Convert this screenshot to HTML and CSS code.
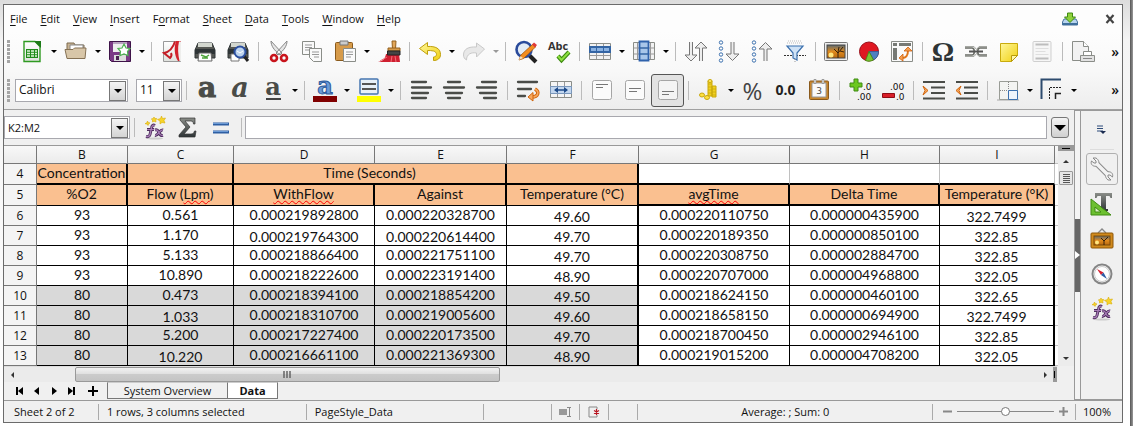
FILE: index.html
```html
<!DOCTYPE html>
<html lang="en">
<head>
<meta charset="utf-8">
<title>Spreadsheet</title>
<link rel="stylesheet" href="styles.css">
</head>
<body>
<svg class="defs" aria-hidden="true">
  <defs>
    <linearGradient id="steel" x1="0" y1="0" x2="0" y2="1"><stop offset="0" stop-color="#8a8d88"/><stop offset="1" stop-color="#2e3436"/></linearGradient>
    <linearGradient id="sunset" x1="0" y1="0" x2="0" y2="1"><stop offset="0" stop-color="#5d6b72"/><stop offset=".5" stop-color="#e08a1e"/><stop offset="1" stop-color="#b8690f"/></linearGradient>
    <linearGradient id="paper" x1="0" y1="0" x2="0" y2="1"><stop offset="0" stop-color="#fff"/><stop offset="1" stop-color="#dfe1dd"/></linearGradient>
    <linearGradient id="yellow" x1="0" y1="0" x2="1" y2="1"><stop offset="0" stop-color="#fff79a"/><stop offset="1" stop-color="#f0d010"/></linearGradient>
    <symbol id="fx" viewBox="0 0 24 24">
      <ellipse cx="12" cy="22.500" rx="8" ry="1" fill="#ccc"/>
      <path d="M12 9.500c-2-1-3 0-3.500 2.500l-1.500 6.500c-.500 2-2 2.500-4 2M4 13.500h7M12 14c3-1 3 1 4 3s2 3 4 2.500M20 14c-3-1-5 6-8 5.500" fill="none" stroke="#4e2d5e" stroke-width="3"/>
      <path d="M12 9.500c-2-1-3 0-3.500 2.500l-1.500 6.500c-.500 2-2 2.500-4 2M4 13.500h7M12 14c3-1 3 1 4 3s2 3 4 2.500M20 14c-3-1-5 6-8 5.500" fill="none" stroke="#a77db6" stroke-width="1.200"/>
      <path d="M18.500 0l1 2.500 3-.500-1.500 2.500 1 2.500-3-.500-2 1.500v-3l-2.500-1.500 3-1zM11 1l.800 1.500 2 0-1 1.700.2 1.800-2-.8-1.500.8v-2l-1.200-1 1.900-.5zM4.500 5l.7 1.500 1.800.5-1.500 1-.5 1.500-1-1.500-2-.300 1.800-.9z" fill="#f7d428" stroke="#d8ad0a" stroke-width=".6"/>
    </symbol>
  </defs>
</svg>
<div class="window">
  <header class="menubar">
    <nav class="menus" aria-label="Menu">
      <button><u>F</u>ile</button><button><u>E</u>dit</button><button><u>V</u>iew</button><button><u>I</u>nsert</button><button>F<u>o</u>rmat</button><button><u>S</u>heet</button><button><u>D</u>ata</button><button><u>T</u>ools</button><button><u>W</u>indow</button><button><u>H</u>elp</button>
    </nav>
    <button class="update" aria-label="Update"><svg width="16" height="14" viewBox="0 0 16 14"><path d="M2 7h12l1.500 3v3H.5v-3z" fill="#b8d4ee" stroke="#44719c"/><path d="M1 12h14" stroke="#3f6f9c" stroke-width="2"/><path d="M5.500 1h5v4h3L8 10.500 2.500 5h3z" fill="#8ed13c" stroke="#3f8a12"/></svg></button>
    <button class="close" aria-label="Close"><svg width="10" height="10" viewBox="0 0 10 10"><path d="M1.500 1l7 8M8.500 1l-7 8" stroke="#444" stroke-width="2.200"/></svg></button>
  </header>

  <div class="toolbar" role="toolbar" aria-label="Standard">
    <span class="grip"></span>
    <button class="tool" aria-label="New"><svg viewBox="0 0 24 24"><path d="M4 1.500h11l5 5v15H4z" fill="url(#paper)" stroke="#2f9a22" stroke-width="1.400"/><path d="M14 1h7v7z" fill="#1d7a18"/><rect x="6" y="9" width="12" height="9" fill="#1f8a18"/><path d="M7 11h3M11 11h3M15 11h2M7 13.500h3M11 13.500h3M15 13.500h2M7 16h3M11 16h3M15 16h2" stroke="#dff5da" stroke-width="1.300"/></svg></button>
    <button class="drop" aria-label="New options"></button>
    <button class="tool" aria-label="Open"><svg viewBox="0 0 24 24"><path d="M3 9V3h7l1 2h9v5" fill="#c9b494" stroke="#7d6a4e"/><path d="M6 5h13v6H6z" fill="#fff" stroke="#888"/><path d="M1 9.500h8l1.500-1.500H22l-1 10.500H3z" fill="#d8c6a8" stroke="#857154"/></svg></button>
    <button class="drop" aria-label="Open options"></button>
    <button class="tool" aria-label="Save"><svg viewBox="0 0 24 24"><path d="M1.500 1.500h21v20h-19l-2-2z" fill="#7b3a86" stroke="#3e1348"/><path d="M5 2h14v10H5z" fill="#eee"/><path d="M5 2h14v2H5z" fill="#b9a2c0"/><path d="M6 15h12v6H6z" fill="#ddd"/><path d="M8 16h3v4H8z" fill="#4a2252"/><path d="M16 4l2 4 4 .500-2.500 3 .500 4-4-1.500-4 1.500.500-4-2.500-3 4-.500z" fill="#fff" stroke="#4cb050" stroke-width="1.200"/></svg></button>
    <button class="drop" aria-label="Save options"></button>
    <i class="sep"></i>
    <button class="tool" aria-label="Export PDF"><svg viewBox="0 0 24 24"><path d="M3.500 1.500h14l3 3v17h-17z" fill="url(#paper)" stroke="#999"/><path d="M15 1.500C13 8 9 12 4 13l6 5c2-2 2-3 1-5" fill="none" stroke="#c41e26" stroke-width="2"/><path d="M16 1h5v20h-3c-4-6-4-14-2-20z" fill="#d3222c"/><path d="M19 1.500c-1.500 6-1 13 .500 19.500h1.500V1.500z" fill="#eeeeec"/></svg></button>
    <button class="tool" aria-label="Print"><svg viewBox="0 0 24 24"><path d="M5 3h14l3 7v8H2v-8z" fill="#555753" stroke="#2e3436"/><path d="M5 3h14v4H5z" fill="#d3d7cf"/><path d="M2 9h20v5H2z" fill="#2e3436"/><path d="M6 13h12l1 8H5z" fill="#fff" stroke="#666"/><path d="M8 15l5 2 3-2M9 18h6" stroke="#4ca33a" stroke-width="1.500" fill="none"/></svg></button>
    <button class="tool" aria-label="Print preview"><svg viewBox="0 0 24 24"><path d="M5 3h14l3 7v8H2v-8z" fill="#555753" stroke="#2e3436"/><path d="M5 3h14v4H5z" fill="#d3d7cf"/><path d="M2 9h20v5H2z" fill="#2e3436"/><path d="M5 14h8v7H5z" fill="#fff" stroke="#777"/><path d="M18 16l4 5" stroke="#222" stroke-width="3"/><circle cx="14" cy="12" r="5.500" fill="#bcd3ee" stroke="#2b4fa0" stroke-width="2"/><path d="M11 11l3 2 3-2" stroke="#fff" fill="none"/></svg></button>
    <i class="sep"></i>
    <button class="tool" aria-label="Cut"><svg viewBox="0 0 24 24"><path d="M4 1c0 5 3 9 9 14l2-2zM20 1c0 5-3 9-9 14l-2-2z" fill="#e6e6e6" stroke="#888"/><ellipse cx="7" cy="18" rx="3" ry="3" fill="none" stroke="#c8141c" stroke-width="2.600"/><ellipse cx="17" cy="18" rx="3" ry="3" fill="none" stroke="#c8141c" stroke-width="2.600"/></svg></button>
    <button class="tool" aria-label="Copy"><svg viewBox="0 0 24 24"><path d="M2.500 1.500h12v13h-12z" fill="#fafafa" stroke="#8a8d88"/><path d="M5 5h7M5 7.500h7M5 10h5" stroke="#999"/><path d="M9.500 8.500h12v13h-8l-4-4z" fill="#fafafa" stroke="#8a8d88"/><path d="M12 12h7M12 14.500h7M14 17h5" stroke="#999"/></svg></button>
    <button class="tool" aria-label="Paste"><svg viewBox="0 0 24 24"><rect x="2.500" y="2.500" width="17" height="18" rx="1" fill="#d79b4a" stroke="#8a5a1c"/><path d="M7 1h8v4H7z" fill="#ccc" stroke="#777"/><path d="M10.500 8.500h12v13h-12z" fill="#fafafa" stroke="#8a8d88"/><path d="M13 12h7M13 14.500h7M13 17h5" stroke="#999"/></svg></button>
    <button class="drop" aria-label="Paste options"></button>
    <button class="tool" aria-label="Clone formatting"><svg viewBox="0 0 24 24"><path d="M1 22c6-1 7-4 8-8h13l1 8z" fill="#cf1f30"/><path d="M3 21l7-4M15 16l-1 6M18 16l1 6" stroke="#f0707a"/><path d="M15 1h4l-.500 8h-3z" fill="#e2a65a" stroke="#93611f"/><path d="M11 8h12v3H11z" fill="#d79b4a" stroke="#93611f"/><path d="M10.500 11h12.500v4H10.500z" fill="#444" stroke="#222"/></svg></button>
    <i class="sep"></i>
    <button class="tool" aria-label="Undo"><svg viewBox="0 0 24 24"><path d="M1.500 8.500l8-6v4c8-.500 13 2 13 8 0 4-3 6-7 6v-3.500c4 0 4-5 0-6-2-.500-4-.500-6-.500v4z" fill="url(#yellow)" stroke="#c0a00c"/></svg></button>
    <button class="drop" aria-label="Undo options"></button>
    <button class="tool" aria-label="Redo"><svg viewBox="0 0 24 24"><path d="M22.500 9l-8-6v4c-8-.500-13 2-13 8 0 2 1 4 3 5 0-6 5-8 10-7v4z" fill="#e8e8e8" stroke="#c9c9c9"/></svg></button>
    <button class="drop faded" aria-label="Redo options"></button>
    <i class="sep"></i>
    <button class="tool" aria-label="Find and replace"><svg viewBox="0 0 24 24"><path d="M15 15l7 7" stroke="#222" stroke-width="4"/><circle cx="10" cy="9.500" r="7.500" fill="#e3ecf6" stroke="#2a4b9b" stroke-width="2.600"/><path d="M5 20l2-5L19 4l3 2.500L9.500 18.500z" fill="#f28d20" stroke="#a85808" stroke-width=".8"/><path d="M18 4.500l2-2 3 2.500-2 2.500z" fill="#e03a3a"/><path d="M5 20l1.500-4 2.500 2z" fill="#f1dfc2"/></svg></button>
    <button class="tool" aria-label="Spelling"><svg viewBox="0 0 24 24"><text x="1" y="10" class="glyph abc">Abc</text><path d="M11 16l3.500 4L22 12" fill="none" stroke="#3d8a10" stroke-width="4.200"/><path d="M11 16l3.500 4L22 12" fill="none" stroke="#8ee040" stroke-width="2"/></svg></button>
    <i class="sep"></i>
    <button class="tool" aria-label="Row"><svg viewBox="0 0 24 24"><path d="M1.500 3.500h21v16h-21z" fill="#f2f2f2" stroke="#8a8d88"/><path d="M8.500 4v15M15.500 4v15M2 15.500h20" stroke="#999"/><path d="M1 6h22v7H1z" fill="#3465a4"/><path d="M3 9.500h18" stroke="#8ab2e2" stroke-width="3"/><path d="M8.500 8v3M15.500 8v3" stroke="#3465a4"/></svg></button>
    <button class="drop" aria-label="Row options"></button>
    <button class="tool" aria-label="Column"><svg viewBox="0 0 24 24"><path d="M1.500 2.500h21v17h-21z" fill="#f2f2f2" stroke="#8a8d88"/><path d="M2 8h20M2 14h20M5.500 3v16M18.500 3v16" stroke="#999"/><path d="M7.500 1.500h9v19h-9z" fill="#a8c6ea" stroke="#2f62ac" stroke-width="1.800"/><path d="M8 8h8M8 14h8" stroke="#3465a4" stroke-width="1.400"/></svg></button>
    <button class="drop" aria-label="Column options"></button>
    <i class="sep"></i>
    <button class="tool" aria-label="Sort"><svg viewBox="0 0 24 24"><path d="M5.500 2v13H1L7 21l6-6H8.500V2M15.500 21V8H11l6-6 6 6h-4.500v13" fill="#eee" stroke="#777"/></svg></button>
    <button class="tool" aria-label="Sort ascending"><svg viewBox="0 0 24 24"><g fill="#fff" stroke="#3b70ae"><circle cx="4" cy="2.500" r="1.700"/><circle cx="4" cy="8.500" r="1.700"/><circle cx="4" cy="14.500" r="1.700"/><circle cx="4" cy="20.500" r="1.700"/></g><path d="M14 2v12H9l6.500 6.500L22 14h-5V2" fill="#eee" stroke="#777"/></svg></button>
    <button class="tool" aria-label="Sort descending"><svg viewBox="0 0 24 24"><g fill="#fff" stroke="#3b70ae"><circle cx="4" cy="2.500" r="1.700"/><circle cx="4" cy="8.500" r="1.700"/><circle cx="4" cy="14.500" r="1.700"/><circle cx="4" cy="20.500" r="1.700"/></g><path d="M14 21V9H9l6.500-6.500L22 9h-5v12" fill="#eee" stroke="#777"/></svg></button>
    <button class="tool" aria-label="AutoFilter"><svg viewBox="0 0 24 24"><path d="M5 1h14M4 3h16" stroke="#bbb" stroke-dasharray="1 1"/><path d="M1 15.500h22" stroke="#333" stroke-dasharray="2 1"/><path d="M4 6h16l-6 7v7l-4-2v-5z" fill="#cfe2f6" stroke="#3b70ae" stroke-width="1.200"/><path d="M12 19v4" stroke="#999" stroke-dasharray="1 1"/></svg></button>
    <i class="sep"></i>
    <button class="tool" aria-label="Image"><svg viewBox="0 0 24 24"><rect x=".5" y="2.500" width="23" height="18" rx="1" fill="#eee" stroke="#777"/><rect x="3" y="5" width="18" height="13" fill="url(#sunset)" stroke="#444"/><circle cx="7" cy="15" r="2.500" fill="#ffe680"/><path d="M14 18v-5l-4-4M14 13l5-6M16 11l4 1M14 12l1-5" stroke="#35200a" fill="none"/></svg></button>
    <button class="tool" aria-label="Chart"><svg viewBox="0 0 24 24"><circle cx="12" cy="11.500" r="9.500" fill="#e01822" stroke="#98101a"/><path d="M12 11.500h9.500c0 4-2 7-5 8.500z" fill="#4f80c0" stroke="#2f5c9b" stroke-width=".8"/><path d="M12 11.500l4.500 8.500c-3 1.500-6 1.500-8 .500z" fill="#7dc434" stroke="#3f8a12" stroke-width=".8"/></svg></button>
    <button class="tool" aria-label="Pivot table"><svg viewBox="0 0 24 24"><path d="M1.500 1.500h21v20h-21z" fill="#fafafa" stroke="#8a8d88"/><path d="M3 3h4v3H3zM9 3h12v3H9zM3 8h4v12H3z" fill="#777a75"/><path d="M12 18c5 0 6-3 6-8" stroke="#e0761a" stroke-width="2" fill="none"/><path d="M14 11l4-4 4 4zM13 14l-4 4 4 3z" fill="#f5a050" stroke="#cf5f0a" stroke-width=".8"/></svg></button>
    <i class="sep"></i>
    <button class="tool" aria-label="Special character"><svg viewBox="0 0 24 24"><text x="12" y="21" text-anchor="middle" class="glyph omega">Ω</text></svg></button>
    <button class="tool" aria-label="Hyperlink"><svg viewBox="0 0 24 24"><path d="M1 6.500h9l2.500 3 2.500-3h8M1 16.500h9l2.500-3 2.500 3h8" fill="none" stroke="#a5a7a2"/><path d="M1 8h7c3 0 3 7 0 7H1M23 8h-7c-3 0-3 7 0 7h7" fill="none" stroke="#696c66" stroke-width="1.600"/><path d="M5 11.500h14" stroke="#555" stroke-width="2"/></svg></button>
    <button class="tool" aria-label="Comment"><svg viewBox="0 0 24 24"><path d="M3.500 3.500h17v12l-6 6h-11z" fill="url(#yellow)" stroke="#c9ab0c"/><path d="M20.500 15.500h-6v6z" fill="#fff7a8" stroke="#b89b08"/></svg></button>
    <button class="tool" aria-label="Headers and footers"><svg viewBox="0 0 24 24"><rect x="3" y="1.500" width="18" height="20" rx="1" fill="#f6f6f6" stroke="#cfcfcf"/><path d="M5.500 4.500h13M5.500 18.500h13" stroke="#bdbdbd" stroke-width="2"/><path d="M5.500 8.500h13M5.500 11.500h10M5.500 14.500h13" stroke="#dedede"/></svg></button>
    <i class="sep"></i>
    <button class="tool" aria-label="Print area"><svg viewBox="0 0 24 24"><path d="M1.500 1.500h11l5 5v14h-16z" fill="#f2f2f2" stroke="#8a8d88"/><path d="M12.500 1.500v5h5" fill="#fff" stroke="#8a8d88"/><path d="M12.500 11.500h8v5h-8z" fill="#fff" stroke="#8a8d88"/><path d="M9.500 15.500h14v6h-14z" fill="#e2e2e2" stroke="#8a8d88"/><path d="M12 18.500h9" stroke="#888"/></svg></button>
    <button class="more" aria-label="More">»</button>
  </div>

  <div class="toolbar format" role="toolbar" aria-label="Formatting">
    <span class="grip"></span>
    <label class="combo font-name"><select aria-label="Font name"><option>Calibri</option></select><span class="arrow"></span></label>
    <label class="combo font-size"><select aria-label="Font size"><option>11</option></select><span class="arrow"></span></label>
    <i class="sep"></i>
    <button class="tool" aria-label="Bold"><svg viewBox="0 0 24 24"><text x="12" y="19" text-anchor="middle" class="glyph serif-a heavy">a</text></svg></button>
    <button class="tool" aria-label="Italic"><svg viewBox="0 0 24 24"><text x="12" y="19" text-anchor="middle" class="glyph serif-a slant">a</text></svg></button>
    <button class="tool" aria-label="Underline"><svg viewBox="0 0 24 24"><text x="12" y="17" text-anchor="middle" class="glyph serif-a">a</text><path d="M5 21h15" stroke="#444" stroke-width="2"/></svg></button>
    <button class="drop" aria-label="Underline options"></button>
    <i class="sep"></i>
    <button class="tool" aria-label="Font color"><svg viewBox="0 0 24 24"><text x="12" y="16" text-anchor="middle" class="glyph serif-a blue">a</text><path d="M0 18h24v6H0z" fill="#800000"/></svg></button>
    <button class="drop" aria-label="Font colors"></button>
    <button class="tool" aria-label="Highlighting"><svg viewBox="0 0 24 24"><rect x="3" y="1" width="18" height="15" rx="1" fill="#e8f0f8" stroke="#4676b0" stroke-width="1.500"/><path d="M5 6h14M5 11h14" stroke="#555" stroke-width="2"/><path d="M0 18h24v6H0z" fill="#ff0"/></svg></button>
    <button class="drop" aria-label="Highlight colors"></button>
    <i class="sep"></i>
    <button class="tool" aria-label="Align left"><svg viewBox="0 0 24 24"><path d="M3 4h14M3 9.500h19M3 15h16M3 20h14" stroke="#4a4c48" stroke-width="2.300" stroke-linecap="round"/></svg></button>
    <button class="tool" aria-label="Center"><svg viewBox="0 0 24 24"><path d="M6 4h12M2 9.500h20M4 15h16M6 20h12" stroke="#4a4c48" stroke-width="2.300" stroke-linecap="round"/></svg></button>
    <button class="tool" aria-label="Align right"><svg viewBox="0 0 24 24"><path d="M7 4h14M2 9.500h19M5 15h16M9 20h12" stroke="#4a4c48" stroke-width="2.300" stroke-linecap="round"/></svg></button>
    <i class="sep"></i>
    <button class="tool" aria-label="Wrap text"><svg viewBox="0 0 24 24"><path d="M2 4h19M2 11h13M2 18h7" stroke="#4a4c48" stroke-width="2.300" stroke-linecap="round"/><path d="M19 11c5 3 3 8-3 8" fill="none" stroke="#d0640c" stroke-width="3.400"/><path d="M19 11c5 3 3 8-3 8" fill="none" stroke="#f9a85c" stroke-width="1.500"/><path d="M17 14.500v8.500l-5-4z" fill="#f9a85c" stroke="#d0640c"/></svg></button>
    <button class="tool" aria-label="Merge cells"><svg viewBox="0 0 24 24"><path d="M1.500 3.500h21v16h-21z" fill="#f5f5f5" stroke="#8a8d88"/><path d="M8.500 4v15M15.500 4v15" stroke="#999"/><path d="M1.500 8.500h21v7h-21z" fill="#c3d7ef" stroke="#7a97bb"/><path d="M6 12h12" stroke="#1e4b8a" stroke-width="1.500"/><path d="M5 12l4-3v6zM19 12l-4-3v6z" fill="#1e4b8a"/></svg></button>
    <i class="sep"></i>
    <button class="tool" aria-label="Align top"><svg viewBox="0 0 24 24"><rect x="2.500" y="2.500" width="19" height="19" rx="2" fill="#fbfbfb" stroke="#a5a5a5"/><path d="M6 6.500h12M6 9.500h7" stroke="#777"/></svg></button>
    <button class="tool" aria-label="Center vertically"><svg viewBox="0 0 24 24"><rect x="2.500" y="2.500" width="19" height="19" rx="2" fill="#fbfbfb" stroke="#a5a5a5"/><path d="M6 10.500h12M6 13.500h8" stroke="#777"/></svg></button>
    <button class="tool pressed" aria-label="Align bottom" aria-pressed="true"><svg viewBox="0 0 24 24"><rect x="2.500" y="2.500" width="19" height="19" rx="2" fill="#f4f4f4" stroke="#a5a5a5"/><path d="M6 13.500h12M6 16.500h7" stroke="#777"/></svg></button>
    <i class="sep"></i>
    <button class="tool" aria-label="Currency"><svg viewBox="0 0 24 24"><path d="M11 3h4v15h-4zM15 8h4v11h-4z" fill="#f0d020" stroke="#c9a80c"/><path d="M11 6h4M11 9h4M11 12h4M11 15h4M15 11h4M15 14h4M15 17h4" stroke="#c9a80c" stroke-width=".7"/><ellipse cx="13" cy="3" rx="2" ry="1.500" fill="#ffe860" stroke="#c9a80c"/><ellipse cx="5" cy="17" rx="2.500" ry="2" fill="#ffe040" stroke="#c9a80c"/><ellipse cx="10" cy="19.500" rx="2.500" ry="2" fill="#ffe040" stroke="#c9a80c"/></svg></button>
    <button class="drop" aria-label="Currency options"></button>
    <button class="tool percent" aria-label="Percent">%</button>
    <button class="tool number" aria-label="Number">0.0</button>
    <button class="tool" aria-label="Date"><svg viewBox="0 0 24 24"><rect x="2.500" y="3" width="19" height="18.500" rx="1" fill="#c8862c" stroke="#8a5a1c"/><path d="M5 5h14v14H5z" fill="#fafafa" stroke="#999"/><path d="M8 1v5M16 1v5" stroke="#999" stroke-width="2.500"/><path d="M8 2v3M16 2v3" stroke="#eee"/><text x="12" y="16" text-anchor="middle" class="glyph day">3</text></svg></button>
    <i class="sep"></i>
    <button class="tool" aria-label="Add decimal place"><svg viewBox="0 0 24 24"><path d="M6 1h4v4h4v4h-4v4H6V9H2V5h4z" fill="#6cc81e" stroke="#3f8a12"/><text x="15" y="12" class="glyph dec">.0</text><text x="9" y="22" class="glyph dec">.00</text></svg></button>
    <button class="tool" aria-label="Delete decimal place"><svg viewBox="0 0 24 24"><path d="M1.500 15.500h12v4h-12z" fill="#d81e28" stroke="#8f0c14"/><text x="9" y="12" class="glyph dec">.00</text><text x="15" y="22" class="glyph dec">.0</text></svg></button>
    <i class="sep"></i>
    <button class="tool" aria-label="Increase indent"><svg viewBox="0 0 24 24"><path d="M1 4h22M9 9.500h14M9 15h14M1 20.500h22" stroke="#4a4c48" stroke-width="2.200"/><path d="M1 8l5 4.500L1 17l2-4.500z" fill="#f9a85c" stroke="#d0640c"/></svg></button>
    <button class="tool" aria-label="Decrease indent"><svg viewBox="0 0 24 24"><path d="M1 4h22M9 9.500h14M9 15h14M1 20.500h22" stroke="#4a4c48" stroke-width="2.200"/><path d="M6 8l-5 4.500L6 17l-2-4.500z" fill="#f9a85c" stroke="#d0640c"/></svg></button>
    <i class="sep"></i>
    <button class="tool" aria-label="Borders"><svg viewBox="0 0 24 24"><path d="M1 22h22" stroke="#ccc" stroke-width="2"/><path d="M3.500 3.500h18v18h-18z" fill="#f3f4f2" stroke="#999c96"/><path d="M12.500 4v8M4 12.500h8" stroke="#888" stroke-dasharray="1 1"/><path d="M12.500 12.500h9v9h-9z" fill="#eef4fb" stroke="#3b70ae"/></svg></button>
    <button class="drop" aria-label="Border options"></button>
    <button class="tool" aria-label="Border style"><svg viewBox="0 0 24 24"><path d="M1.500 21V1.500H21" fill="none" stroke="#2d4b6e" stroke-width="2"/><path d="M9.500 21V9.500H22" fill="none" stroke="#222" stroke-dasharray="2 1"/><path d="M15.500 21v-5.500H21" fill="none" stroke="#222" stroke-width="1.500"/></svg></button>
    <button class="drop" aria-label="Border styles"></button>
    <button class="more" aria-label="More">»</button>
  </div>

  <main class="main">
    <section class="workspace">
      <div class="formula">
        <div class="combo name-box"><input type="text" value="K2:M2" aria-label="Name box"><button class="arrow" aria-label="Names"></button></div>
        <i class="sep"></i>
        <button class="tool" aria-label="Function wizard"><svg><use href="#fx"/></svg></button>
        <button class="tool" aria-label="Sum"><svg viewBox="0 0 24 24"><path d="M4 2h15v6h-1.500c0-2-1-3-3-3H9l5 6-6 7h7c2 0 3-1 3.500-3H20l-1 6H3v-2l7-8-6-7z" fill="url(#steel)" stroke="#333" stroke-width=".7"/></svg></button>
        <button class="tool" aria-label="Formula"><svg viewBox="0 0 24 24"><path d="M4 8h16M4 16h16" stroke="#2e5fa3" stroke-width="3"/><path d="M4 7.500h15M4 15.500h15" stroke="#6c9bd6"/></svg></button>
        <i class="sep"></i>
        <input class="formula-input" type="text" aria-label="Input line">
        <button class="expand" aria-label="Expand formula bar"></button>
      </div>

      <div class="sheet">
        <table class="grid">
          <colgroup><col class="w-head"><col class="w-b"><col class="w-c"><col class="w-d"><col class="w-e"><col class="w-f"><col class="w-g"><col class="w-h"><col class="w-i"><col class="w-end"></colgroup>
          <thead><tr><th></th><th>B</th><th>C</th><th>D</th><th>E</th><th>F</th><th>G</th><th>H</th><th>I</th><th class="rest"></th></tr></thead>
          <tbody>
            <tr class="titles"><th>4</th><td>Concentration</td><td></td><td colspan="2">Time (Seconds)</td><td class="edge"></td><td class="blank"></td><td class="blank"></td><td class="blank last"></td><td class="rest"></td></tr>
            <tr class="titles names"><th>5</th><td>%O2</td><td>Flow (<span class="typo">Lpm</span>)</td><td><span class="typo">WithFlow</span></td><td>Against</td><td class="edge">Temperature (°C)</td><td class="calc"><span class="typo">avgTime</span></td><td class="calc">Delta Time</td><td class="calc last">Temperature (°K)</td><td class="rest"></td></tr>
            <tr><th>6</th><td>93</td><td>0.561</td><td>0.000219892800</td><td>0.000220328700</td><td class="edge low">49.60</td><td>0.000220110750</td><td>0.000000435900</td><td class="last low">322.7499</td><td class="rest"></td></tr>
            <tr><th>7</th><td>93</td><td>1.170</td><td class="low">0.000219764300</td><td class="low">0.000220614400</td><td class="edge low">49.70</td><td>0.000220189350</td><td>0.000000850100</td><td class="last low">322.85</td><td class="rest"></td></tr>
            <tr><th>8</th><td>93</td><td>5.133</td><td>0.000218866400</td><td>0.000221751100</td><td class="edge low">49.70</td><td>0.000220308750</td><td>0.000002884700</td><td class="last low">322.85</td><td class="rest"></td></tr>
            <tr><th>9</th><td>93</td><td>10.890</td><td>0.000218222600</td><td>0.000223191400</td><td class="edge low">48.90</td><td>0.000220707000</td><td>0.000004968800</td><td class="last low">322.05</td><td class="rest"></td></tr>
            <tr class="shade"><th>10</th><td>80</td><td>0.473</td><td>0.000218394100</td><td>0.000218854200</td><td class="edge low">49.50</td><td>0.000218624150</td><td>0.000000460100</td><td class="last low">322.65</td><td class="rest"></td></tr>
            <tr class="shade"><th>11</th><td>80</td><td class="low">1.033</td><td>0.000218310700</td><td>0.000219005600</td><td class="edge low">49.60</td><td>0.000218658150</td><td>0.000000694900</td><td class="last low">322.7499</td><td class="rest"></td></tr>
            <tr class="shade"><th>12</th><td>80</td><td>5.200</td><td>0.000217227400</td><td>0.000220173500</td><td class="edge low">49.70</td><td>0.000218700450</td><td>0.000002946100</td><td class="last low">322.85</td><td class="rest"></td></tr>
            <tr class="shade"><th>13</th><td>80</td><td class="low">10.220</td><td>0.000216661100</td><td>0.000221369300</td><td class="edge low">48.90</td><td>0.000219015200</td><td>0.000004708200</td><td class="last low">322.05</td><td class="rest"></td></tr>
          </tbody>
        </table>
        <div class="vscroll">
          <span class="split-h"></span>
          <button class="tri up" aria-label="Scroll up"></button>
          <span class="thumb-v"><svg width="8" height="9" viewBox="0 0 8 9"><path d="M1 .500h7M1 2.500h7M1 4.500h7M1 6.500h7M1 8.500h7" stroke="#555"/></svg></span>
          <span class="fill"></span>
          <button class="tri down" aria-label="Scroll down"></button>
        </div>
      </div>

      <div class="hscroll">
        <button class="tri left" aria-label="Scroll left"></button>
        <span class="before"></span>
        <span class="thumb-h"><svg width="9" height="7" viewBox="0 0 9 7"><path d="M1 0v7M4 0v7M7 0v7" stroke="#666" stroke-width="1.500"/></svg></span>
        <span class="after"></span>
        <button class="tri right" aria-label="Scroll right"></button>
        <span class="split-v"></span>
      </div>

      <div class="tabs">
        <button class="nav" aria-label="First sheet"><svg width="8" height="8" viewBox="0 0 8 8"><path d="M1 0v8" stroke="#000" stroke-width="2"/><path d="M7 0v8L2 4z"/></svg></button>
        <button class="nav" aria-label="Previous sheet"><svg width="8" height="8" viewBox="0 0 8 8"><path d="M6 0v8L1 4z"/></svg></button>
        <button class="nav" aria-label="Next sheet"><svg width="8" height="8" viewBox="0 0 8 8"><path d="M2 0v8l5-4z"/></svg></button>
        <button class="nav" aria-label="Last sheet"><svg width="8" height="8" viewBox="0 0 8 8"><path d="M7 0v8" stroke="#000" stroke-width="2"/><path d="M1 0v8l5-4z"/></svg></button>
        <button class="nav add" aria-label="Add sheet"><svg width="10" height="10" viewBox="0 0 10 10"><path d="M5 0v10M0 5h10" stroke="#000" stroke-width="2"/></svg></button>
        <button class="tab">System Overview</button><button class="tab active">Data</button>
      </div>
    </section>

    <div class="splitter"><button aria-label="Hide sidebar"><svg width="5" height="8" viewBox="0 0 5 8"><path d="M0 0l5 4-5 4z" fill="#fff"/></svg></button></div>

    <aside class="sidebar">
      <button class="side-menu" aria-label="Sidebar settings"><svg width="10" height="10" viewBox="0 0 10 10"><path d="M0 1h6M0 3.500h6M0 6h6" stroke="#2d4b7a"/><path d="M3 6h6L6 9z" fill="#1b2c50"/></svg></button>
      <button class="deck on" aria-label="Properties"><svg viewBox="0 0 24 24"><path d="M7 7l10 10" stroke="#888" stroke-width="5.500"/><path d="M3 1l3 3v2H4L1.500 4C0 8 4 10 7 9M7 9c3-3 2-6-1-8H3M21 23l-3-3v-2h2l2.500 2c1-4-2-6-6-5M16.500 15c-2 3-1 6 1.500 8h3" fill="#f3f3f3" stroke="#888"/><path d="M6.500 6.500l11 11" stroke="#f3f3f3" stroke-width="3.500"/></svg></button>
      <button class="deck" aria-label="Styles"><svg viewBox="0 0 24 24"><path d="M5 1h17v5h-1.500l-1-2H16v13h2v2H9v-2h2V4H7.500l-1 2H5z" fill="url(#steel)"/><path d="M1 7v16h20z" fill="#6cc030" stroke="#3f8a12"/><path d="M5 15v5h6z" fill="#d9f2c4" stroke="#3f8a12"/></svg></button>
      <button class="deck" aria-label="Gallery"><svg viewBox="0 0 24 24"><path d="M8 6l4-4 4 4" fill="none" stroke="#888" stroke-width="1.300"/><rect x="1" y="6" width="22" height="15" rx="1" fill="#d18a1c" stroke="#8d5708"/><rect x="4" y="9" width="16" height="9" fill="url(#sunset)" stroke="#7a4b08"/><circle cx="7" cy="15.500" r="2" fill="#ffe680"/><path d="M14 18v-4l-3-3M14 14l4-4" stroke="#35200a" fill="none"/></svg></button>
      <button class="deck" aria-label="Navigator"><svg viewBox="0 0 24 24"><circle cx="12" cy="12" r="9.500" fill="#f8f8f8" stroke="#858585" stroke-width="2"/><circle cx="12" cy="12" r="7.500" fill="#fff" stroke="#ccc"/><path d="M7 7l6.500 3.500L11 13z" fill="#d62030"/><path d="M17 17l-6-4 2.500-2.500z" fill="#2d5ba5"/></svg></button>
      <button class="deck" aria-label="Functions"><svg><use href="#fx"/></svg></button>
    </aside>
  </main>

  <footer class="status">
    <span class="first">Sheet 2 of 2</span><span>1 rows, 3 columns selected</span><span>PageStyle_Data</span><span></span>
    <span class="mid"><svg width="12" height="10" viewBox="0 0 12 10"><path d="M0 2h8v6H0z" fill="#999"/><path d="M8 .500h4M8 9.500h4M10.500 1v8" stroke="#888"/></svg></span>
    <span class="mid"><svg width="12" height="12" viewBox="0 0 12 12"><path d="M9 3V1H1v10h8V9" fill="none" stroke="#888"/><path d="M8.500 3v6M6 4.500l5 3M11 4.500l-5 3" stroke="#b81420" stroke-width="1.200"/></svg></span>
    <span></span><span class="mid">Average: ; Sum: 0</span>
    <span class="zoom"><button aria-label="Zoom out"><svg width="9" height="9" viewBox="0 0 9 9"><path d="M0 4.500h9" stroke="#888" stroke-width="2"/></svg></button><input type="range" min="0" max="100" value="50" aria-label="Zoom"><button aria-label="Zoom in"><svg width="9" height="9" viewBox="0 0 9 9"><path d="M0 4.500h9M4.500 0v9" stroke="#888" stroke-width="2"/></svg></button></span>
    <span>100%</span>
  </footer>
</div>
</body>
</html>
```
FILE: styles.css
```css
* { box-sizing: border-box; }

body {
  margin: 0;
  min-height: 100vh;
  padding: 4px 10px 4px 3px;
  font: 11px/16px "Open Sans", "Noto Sans", sans-serif;
  color: #111;
  background:
    linear-gradient(90deg, #555, #999) right / 3px 100% no-repeat,
    linear-gradient(#dcdcdc, #f4f4f4 40px, #fff);
}

button, input, select { font: inherit; color: inherit; margin: 0; }
button { display: flex; align-items: center; justify-content: center; padding: 0; border: 0; background: none; }
svg { display: block; }
.defs { position: absolute; width: 0; height: 0; }

.window { border: 1px solid #6b6b6b; background: #f0f0f0; }

/* Menu bar */
.menubar { display: flex; align-items: center; height: 27px; padding: 0 7px 0 6px; background: #fdfdfd; }
.menus { display: flex; gap: 13px; margin-right: auto; }
.menus u { text-underline-offset: 2px; }
.update { margin-right: 27px; }

/* Toolbars */
.toolbar { display: flex; align-items: center; height: 39px; padding-left: 3px; background: linear-gradient(#fdfdfd, #f8f8f8); }
.format { background: linear-gradient(#f8f8f8, #ededed); border-bottom: 1px solid #a0a0a0; }
.grip { width: 3px; height: 23px; margin-right: 5px; background: repeating-linear-gradient(#a5a5a5 0 3px, transparent 3px 4px); }
.tool { flex: none; width: 33px; height: 33px; }
.tool svg { width: 24px; height: 24px; overflow: visible; }
.tool.pressed { border: 1px solid #555; border-radius: 3px; background: #e2e2e2; }
.drop { flex: none; width: 11px; height: 24px; }
.drop::before { content: ""; border: 3px solid transparent; border-top-color: #000; border-bottom: 0; }
.drop.faded::before { border-top-color: #999; }
.sep { flex: none; width: 8px; height: 19px; background: linear-gradient(#bbb, #bbb) center / 1px 100% no-repeat; }
.more { margin-left: auto; padding-right: 3px; font-size: 14px; font-weight: 600; }

.combo { display: flex; flex: none; height: 23px; background: #fff; border: 1px solid #a8a8ae; }
.combo select, .combo input { flex: 1; min-width: 0; padding: 0 3px; border: 0; background: none; appearance: none; outline: 0; font-size: 12px; }
.combo .arrow { display: flex; align-items: center; justify-content: center; width: 17px; margin: 1px 1px 0 0; height: 20px; border: 1px solid #777; background: linear-gradient(#f4f4f4, #d4d4d4); }
.arrow::before { content: ""; border: 4px solid transparent; border-top-color: #000; border-bottom: 0; }
.font-name { width: 113px; margin-right: 8px; }
.font-size { width: 46px; }
.name-box input { font-size: 11px; }

.glyph { font-family: "DejaVu Serif", serif; font-weight: bold; fill: #4a4c48; }
.abc { font: bold 11px "Open Sans", sans-serif; fill: #333; }
.omega { font: bold 28px "Liberation Serif", serif; fill: #2e3436; }
.serif-a { font-size: 24px; }
.heavy { font-size: 28px; stroke: #4a4c48; }
.slant { font-size: 27px; font-style: italic; }
.blue { fill: #6a9bd8; stroke: #2d5a9b; stroke-width: 1px; }
.day { font: 9px "DejaVu Sans", sans-serif; }
.dec { font: 9px "DejaVu Sans", sans-serif; fill: #111; }
.percent { font-size: 24px; line-height: 33px; color: #444; }
.number { font-size: 14px; font-weight: bold; color: #222; }

/* Main area */
.main { display: flex; }
.workspace { flex: 1; min-width: 0; display: flex; flex-direction: column; }
.formula { display: flex; align-items: center; height: 36px; padding-right: 5px; border-bottom: 1px solid #999; }
.name-box { width: 126px; }
.formula-input { flex: 1; min-width: 0; height: 23px; border: 1px solid #a8a8ae; background: #fff; }
.expand { width: 18px; height: 21px; margin-left: 4px; border: 1px solid #777; border-radius: 3px; background: linear-gradient(#f4f4f4, #d0d0d0); }
.expand::before { content: ""; border: 6px solid transparent; border-top-color: #000; border-bottom: 0; }

.sheet { display: flex; }
.grid { flex: 1; width: 100%; min-width: 0; table-layout: fixed; border-collapse: separate; border-spacing: 0; background: #fff; font: 14px/16px Lato, sans-serif; text-align: center; }
.w-head { width: 33px; }
.w-b { width: 91px; }
.w-c { width: 106px; }
.w-d { width: 141px; }
.w-e { width: 132px; }
.w-f { width: 132px; }
.w-g { width: 151px; }
.w-h { width: 150px; }
.w-i { width: 115px; }
.w-end { width: 3px; }
.grid th, .grid td { height: 20px; padding: 1px 0 0; white-space: nowrap; vertical-align: top; border: 0 solid #000; border-width: 0 1px 1px 0; }
.grid th { padding: 0; font: 12px/16px "Open Sans", sans-serif; vertical-align: middle; border-color: #777; background: #f4f4f4; }
.grid thead th { height: 18px; background: linear-gradient(#f8f8f8, #ebebeb); }
.grid td.low { vertical-align: bottom; }
.grid td.edge { border-right-width: 2px; }
.grid td.last { border-right-width: 2px; }
.grid .rest { border-width: 0 0 1px; border-color: #c0c0c0; }
.grid .titles td { height: 21px; background: #fac090; border-width: 0 2px 2px 0; }
.grid .titles td.blank { background: #fff; border-right: 1px solid #c0c0c0; }
.grid .names td { border-bottom-width: 1px; }
.grid .names td.calc { border-bottom-width: 2px; }
.grid .titles td.rest { border-width: 0 0 1px; background: #fff; }
.shade td:nth-child(-n+6) { background: #d9d9d9; }
.typo { text-decoration: underline wavy #f00 1px; text-underline-offset: 1px; text-decoration-skip-ink: none; }

/* Scrollbars */
.vscroll { display: flex; flex-direction: column; align-items: center; width: 17px; background: #ececec; }
.split-h { width: 100%; height: 5px; border: 2px solid #999; border-width: 2px 4px; background: #000; }
.tri { flex: none; width: 16px; height: 16px; }
.tri::before { content: ""; border: 3px solid transparent; }
.up { height: 20px; }
.up::before { border-bottom-color: #333; border-top: 0; }
.down::before { border-top-color: #333; border-bottom: 0; }
.left::before { border-right-color: #333; border-left: 0; }
.right::before { border-left-color: #333; border-right: 0; }
.thumb-v { display: flex; align-items: center; justify-content: center; width: 14px; height: 14px; border: 1px solid #999; border-radius: 1px; background: #e6e6e6; }
.fill { flex: 1; }
.hscroll { display: flex; align-items: center; height: 16px; margin-right: 17px; background: #ebebeb; border-top: 1px solid #ddd; }
.before { flex: 55; }
.thumb-h { flex: 424; height: 15px; display: flex; align-items: center; justify-content: center; border: 1px solid #999; border-radius: 2px; background: linear-gradient(#f2f2f2, #e0e0e0 45%, #cbcbcb 50%, #c4c4c4); }
.after { flex: 538; }
.split-v { width: 4px; height: 15px; border: 2px solid #999; border-width: 4px 2px 4px 1px; background: #000; }

/* Sheet tabs */
.tabs { display: flex; align-items: flex-start; height: 18px; padding-left: 7px; }
.nav { width: 17px; height: 18px; }
.nav.add { width: 28px; }
.tab { height: 17px; width: 121px; border: 1px solid #777; border-top-color: #ccc; background: #f0f0f0; }
.tab.active { width: 50px; border-left: 0; background: #fff; font-weight: bold; }

/* Sidebar */
.splitter { display: flex; align-items: center; width: 7px; border: 1px solid #999; background: #f4f4f4; }
.splitter button { width: 5px; height: 73px; background: #666; }
.sidebar { display: flex; flex-direction: column; align-items: center; gap: 3px; width: 41px; padding: 0 4px; border: solid #999; border-width: 1px 0; }
.side-menu { width: 24px; height: 39px; border-bottom: 1px solid #ddd; }
.deck { width: 32px; height: 32px; border-radius: 3px; }
.deck.on { border: 1px solid #b0b0b0; }
.deck svg { width: 24px; height: 24px; }

/* Status bar */
.status { display: grid; grid-template-columns: 95fr 208fr 177fr 68fr 29fr 29fr 29fr 295fr 143fr 46fr; align-items: center; height: 22px; border-top: 1px solid #999; }
.status > span { display: flex; align-items: center; min-width: 0; height: 16px; padding-left: 8px; border-right: 1px solid #aaa; white-space: nowrap; }
.status > span:last-child { border-right: 0; padding-left: 7px; }
.status .first { padding-left: 10px; }
.status .mid { padding-left: 0; justify-content: center; }
.status .zoom { gap: 5px; padding-right: 7px; padding-left: 10px; }
.zoom input { flex: 1; min-width: 0; height: 10px; appearance: none; background: linear-gradient(#888, #888) center / 100% 1px no-repeat; }
.zoom input::-webkit-slider-thumb { appearance: none; width: 9px; height: 9px; border: 1px solid #777; border-radius: 50%; background: #fff; }
```
